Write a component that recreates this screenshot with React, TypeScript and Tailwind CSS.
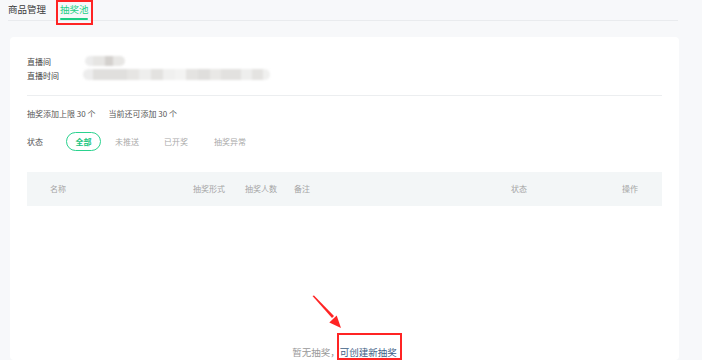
import React from "react";

const font = { fontFamily: '"Noto Sans CJK SC", "Noto Sans", sans-serif' };

function Blur() {
  return (
    <div className="flex flex-col gap-[3px] blur-[1px]">
      <div className="flex h-[10px] ml-[2px]">
        <div className="w-[8px] bg-[#ececec] rounded-l-full" />
        <div className="w-[12px] bg-[#e6e5e3]" />
        <div className="w-[8px] bg-[#d4d1ce]" />
        <div className="w-[12px] bg-[#e8e7e5] rounded-r-full" />
      </div>
      <div className="flex h-[11px]">
        <div className="w-[10px] bg-[#ededed] rounded-l-full" />
        <div className="w-[34px] bg-[#e0dfdd]" />
        <div className="w-[12px] bg-[#e6e5e3]" />
        <div className="w-[12px] bg-[#eeeeed]" />
        <div className="w-[12px] bg-[#e3e2e0]" />
        <div className="w-[12px] bg-[#f0f0ef]" />
        <div className="w-[11px] bg-[#f3f3f2]" />
        <div className="w-[12px] bg-[#e4e3e1]" />
        <div className="w-[12px] bg-[#dfdedc]" />
        <div className="w-[11px] bg-[#e9e8e6]" />
        <div className="w-[20px] bg-[#e2e1df]" />
        <div className="w-[11px] bg-[#eeeeed]" />
        <div className="w-[11px] bg-[#e4e3e1]" />
        <div className="w-[7px] bg-[#f0f0ef] rounded-r-full" />
      </div>
    </div>
  );
}

export default function App() {
  return (
    <div
      className="relative w-[702px] h-[360px] overflow-hidden bg-[#f7f8fa] flex flex-col"
      style={font}
    >
      {/* Tabs */}
      <div className="mx-[8px] mr-[24px] h-[21px] border-b border-[#e9ebee] flex items-start text-[9.5px] leading-[18px]">
        <div className="text-[#3a3a3a]">商品管理</div>
        <div className="ml-[14px] flex flex-col items-center">
          <div className="text-[#1ccf84] leading-[18px]">抽奖池</div>
          <div className="w-[28px] h-[2px] bg-[#1ccf84] rounded-full" />
        </div>
      </div>

      {/* Card */}
      <div className="mx-[10px] mr-[23px] mt-[16px] flex-1 bg-white rounded-[4px] px-[17px] pt-[18px] flex flex-col text-[8px] leading-[14px]">
        <div className="flex">
          <div className="flex flex-col text-[#444] w-[56px]">
            <div>直播间</div>
            <div>直播时间</div>
          </div>
          <div className="pt-[1px]">
            <Blur />
          </div>
        </div>

        <div className="mt-[12px] h-[1px] bg-[#eceef0]" />

        <div className="mt-[11px] flex text-[#555]">
          <div>抽奖添加上限 30&nbsp;个</div>
          <div className="ml-[13px]">当前还可添加 30&nbsp;个</div>
        </div>

        <div className="mt-[11px] flex items-center h-[19px]">
          <div className="text-[#555] w-[39px]">状态</div>
          <div className="w-[35px] h-[19px] rounded-full border border-[#2ad28e] flex items-center justify-center text-[#14c47c] font-bold">
            全部
          </div>
          <div className="ml-[14px] text-[#aaa]">未推送</div>
          <div className="ml-[25px] text-[#aaa]">已开奖</div>
          <div className="ml-[26px] text-[#aaa]">抽奖异常</div>
        </div>

        <div className="mt-[21px] h-[34px] bg-[#f3f6f7] flex items-center text-[#a5a5a5] pl-[23px]">
          <div className="w-[143px]">名称</div>
          <div className="w-[52px]">抽奖形式</div>
          <div className="w-[49px]">抽奖人数</div>
          <div className="w-[217px]">备注</div>
          <div className="w-[111px]">状态</div>
          <div>操作</div>
        </div>

        <div className="flex-1 flex items-end justify-center pb-[1px]">
          <div className="text-[9.5px] leading-[14px] text-[#999]">
            暂无抽奖，<span className="text-[#3d5e86]">可创建新抽奖</span>
          </div>
        </div>
      </div>

      {/* Annotations */}
      <div className="absolute left-[56px] top-[0px] w-[37px] h-[25px] border-2 border-[#ff2424]" />
      <div className="absolute left-[337px] top-[333px] w-[65px] h-[27px] border-2 border-[#ff2424]" />
      <svg className="absolute left-0 top-0" width="702" height="360" viewBox="0 0 702 360">
        <polygon points="312.5,296 314,295.5 334,316 332,318" fill="#ff2424" />
        <polygon points="341,328 329.3,322.4 336.7,315.6" fill="#ff2424" />
      </svg>
    </div>
  );
}
